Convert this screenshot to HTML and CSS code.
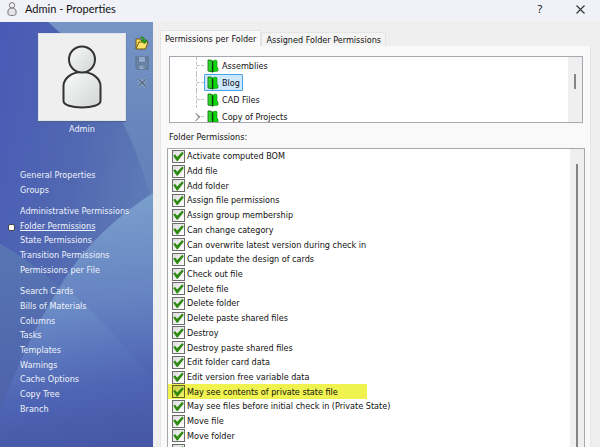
FILE: index.html
```html
<!DOCTYPE html>
<html lang="en">
<head>
<meta charset="utf-8">
<title>Admin - Properties</title>
<link rel="stylesheet" href="styles.css">
</head>
<body>
<svg class="defs" aria-hidden="true">
  <defs>
    <linearGradient id="body-fill" x1="0" y1="0" x2="1" y2="1"><stop offset="0" stop-color="#fafafa"/><stop offset="1" stop-color="#d2d5d5"/></linearGradient>
    <linearGradient id="door" x1="0" y1="0" x2="1" y2="0"><stop offset="0" stop-color="#3fe83a"/><stop offset="1" stop-color="#0cae0c"/></linearGradient>
    <symbol id="person" viewBox="0 0 40 64">
      <path d="M20 27C9 27 1.500 34 1.500 41V56C1.500 60 10 62.500 20 62.500S38.500 60 38.500 56V41C38.500 34 31 27 20 27Z" fill="url(#body-fill)" stroke="#333" stroke-width="2"/>
      <circle cx="20" cy="14.500" r="13" fill="url(#body-fill)" stroke="#333" stroke-width="2"/>
    </symbol>
    <symbol id="folder" viewBox="0 0 12 14">
      <path d="M5 2L9 1L10 2V8L11 9V12L5 13Z" fill="#10d410" stroke="#0a8a0a" stroke-width=".6"/>
      <path d="M1 1H4L6 3V13L1 12Z" fill="url(#door)" stroke="#086008" stroke-width=".8"/>
      <path d="M5.500 2.500V13" stroke="#063f06" stroke-width="1"/>
    </symbol>
  </defs>
</svg>
<header class="titlebar">
  <svg class="title-icon" viewBox="0 0 10 14"><path d="M5 6C2.500 6 1 7.500 1 9V12C1 13 3 13.500 5 13.500S9 13 9 12V9C9 7.500 7.500 6 5 6Z" fill="#e5e6e8" stroke="#777"/><circle cx="5" cy="3.300" r="2.700" fill="#eee" stroke="#777"/></svg>
  <h1>Admin - Properties</h1>
  <button class="title-button" aria-label="Help">?</button>
  <button class="title-button" aria-label="Close"><svg width="9" height="9" viewBox="0 0 9 9"><path d="M.5.5L8.500 8.500M8.500.5L.5 8.500" stroke="#333" stroke-width="1.100"/></svg></button>
</header>
<div class="window">
  <aside class="sidebar">
    <svg class="backdrop" viewBox="0 0 153 425" preserveAspectRatio="none" aria-hidden="true">
      <defs>
        <linearGradient id="base" x1="0" y1="0" x2="1" y2=".6"><stop offset="0" stop-color="#475ab6"/><stop offset=".5" stop-color="#5168b1"/><stop offset="1" stop-color="#6280b8"/></linearGradient>
        <linearGradient id="top" gradientUnits="userSpaceOnUse" x1="100" y1="0" x2="100" y2="240"><stop offset="0" stop-color="#7695c5"/><stop offset=".5" stop-color="#6784bb"/><stop offset="1" stop-color="#5f7cb8"/></linearGradient>
        <linearGradient id="arc" x1=".5" y1="0" x2=".6" y2="1"><stop offset="0" stop-color="#7ba0cd"/><stop offset=".45" stop-color="#6a8ac6"/><stop offset=".78" stop-color="#4e64b4"/><stop offset="1" stop-color="#4657a7"/></linearGradient>
        <linearGradient id="left" x1="0" y1="0" x2="0" y2="1"><stop offset="0" stop-color="#5876b3"/><stop offset="1" stop-color="#4a5da9"/></linearGradient>
        <linearGradient id="right" x1="0" y1="0" x2="0" y2="1"><stop offset="0" stop-color="#7ba0cd"/><stop offset="1" stop-color="#4a60b0"/></linearGradient>
      </defs>
      <path d="M0 0H153V425H0Z" fill="url(#base)"/>
      <path d="M48 0H153V175L148 166Q137 128 121 97Q96 40 48 0Z" fill="url(#top)"/>
      <path d="M0 222Q28 237 60 265V425H0Z" fill="url(#left)"/>
      <path d="M153 171Q90 212 60 265Q30 310 0 390V425H153Z" fill="url(#arc)"/>
      <path d="M153 171V358Q110 305 62 262Q92 212 153 171Z" fill="url(#right)" opacity=".5"/>
    </svg>
    <div class="profile">
      <figure>
        <div class="avatar"><svg width="40" height="64"><use href="#person"/></svg></div>
        <figcaption>Admin</figcaption>
      </figure>
      <div class="tools">
        <button aria-label="Open picture"><svg width="14" height="14" viewBox="0 0 14 14"><path d="M1 13V3H5L6 4.500H10V7" fill="#f7dc57" stroke="#715914"/><path d="M1 13L4 6H13L10.500 13Z" fill="#ffe36b" stroke="#715914"/><path d="M5 1Q9 0 10 4H12.500L9.500 8L6 4.500H8Q7.500 2 5 1Z" fill="#2c9b20" stroke="#226c1a" stroke-width=".4"/></svg></button>
        <button aria-label="Save picture"><svg width="14" height="14" viewBox="0 0 14 14"><path d="M1 1H13V13H3L1 11Z" fill="#6885ad" stroke="#607894" stroke-width="1.500"/><path d="M3.500 1V6.500H10.500V1M4 13V9H10V13M8 10V12" fill="#93aaca" stroke="#607894"/></svg></button>
        <button aria-label="Delete picture"><svg width="14" height="14" viewBox="0 0 14 14"><path d="M3.500 3L11 10.500M11 3L3.500 10.500" stroke="#9fb4d4" stroke-width="2.600"/><path d="M3.500 3L11 10.500M11 3L3.500 10.500" stroke="#56677c" stroke-width="1.400"/></svg></button>
      </div>
    </div>
    <nav>
      <div class="links links-first"><a href="#">General Properties</a><a href="#">Groups</a></div>
      <div class="links links-access"><a href="#">Administrative Permissions</a><a href="#" class="current" aria-current="page">Folder Permissions</a><a href="#">State Permissions</a><a href="#">Transition Permissions</a><a href="#">Permissions per File</a></div>
      <div class="links links-settings"><a href="#">Search Cards</a><a href="#">Bills of Materials</a><a href="#">Columns</a><a href="#">Tasks</a><a href="#">Templates</a><a href="#">Warnings</a><a href="#">Cache Options</a><a href="#">Copy Tree</a><a href="#">Branch</a></div>
    </nav>
  </aside>
  <main>
    <div class="tabs" role="tablist">
      <button class="tab active" role="tab" aria-selected="true">Permissions per Folder</button>
      <button class="tab" role="tab" aria-selected="false">Assigned Folder Permissions</button>
    </div>
    <section class="panel">
      <div class="box tree">
        <ul>
          <li><button><svg><use href="#folder"/></svg>Assemblies</button></li>
          <li><button class="selected"><svg><use href="#folder"/></svg>Blog</button></li>
          <li><button><svg><use href="#folder"/></svg>CAD Files</button></li>
          <li class="branch"><button><svg><use href="#folder"/></svg>Copy of Projects</button></li>
        </ul>
        <div class="scroll"><span class="thumb"></span></div>
      </div>
      <h2>Folder Permissions:</h2>
      <div class="box permissions">
        <div class="checks">
          <label><input type="checkbox" checked>Activate computed BOM</label>
          <label><input type="checkbox" checked>Add file</label>
          <label><input type="checkbox" checked>Add folder</label>
          <label><input type="checkbox" checked>Assign file permissions</label>
          <label><input type="checkbox" checked>Assign group membership</label>
          <label><input type="checkbox" checked>Can change category</label>
          <label><input type="checkbox" checked>Can overwrite latest version during check in</label>
          <label><input type="checkbox" checked>Can update the design of cards</label>
          <label><input type="checkbox" checked>Check out file</label>
          <label><input type="checkbox" checked>Delete file</label>
          <label><input type="checkbox" checked>Delete folder</label>
          <label><input type="checkbox" checked>Delete paste shared files</label>
          <label><input type="checkbox" checked>Destroy</label>
          <label><input type="checkbox" checked>Destroy paste shared files</label>
          <label><input type="checkbox" checked>Edit folder card data</label>
          <label><input type="checkbox" checked>Edit version free variable data</label>
          <label class="marked"><input type="checkbox" checked>May see contents of private state file</label>
          <label><input type="checkbox" checked>May see files before initial check in (Private State)</label>
          <label><input type="checkbox" checked>Move file</label>
          <label><input type="checkbox" checked>Move folder</label>
          <label><input type="checkbox" checked aria-label="Next permission"></label>
        </div>
        <div class="scroll"><span class="thumb"></span></div>
      </div>
    </section>
  </main>
</div>
</body>
</html>
```
FILE: styles.css
```css
* { box-sizing: border-box; }
body {
  margin: 0;
  height: 100vh;
  overflow: hidden;
  display: flex;
  flex-direction: column;
  background: #efefef;
  color: #111;
  font: 9px/14px "DejaVu Sans Condensed", "DejaVu Sans", sans-serif;
}
button { margin: 0; padding: 0; border: 0; background: none; color: inherit; font: inherit; }
h1, h2, figure, ul { margin: 0; padding: 0; font: inherit; list-style: none; }
.defs { position: absolute; width: 0; height: 0; }

.titlebar {
  flex: none;
  display: flex;
  align-items: center;
  height: 22px;
  padding: 0 0 4px 7px;
  background: #f0f2f8;
}
.title-icon { width: 10px; height: 14px; }
.titlebar h1 { flex: 1; padding-left: 8px; font: 11px/18px Lato, sans-serif; }
.title-button { display: grid; place-items: center; width: 40px; height: 18px; font: 11px/18px "Noto Sans", sans-serif; }

.window { flex: 1; min-height: 0; display: flex; }
.sidebar {
  position: relative;
  flex: none;
  width: 153px;
  overflow: hidden;
  color: #eef2fb;
}
.backdrop { position: absolute; inset: 0; width: 100%; height: 100%; }
.profile { position: relative; display: flex; gap: 9px; padding: 11px 0 0 38px; }
.avatar {
  display: grid;
  place-items: center;
  width: 88px;
  height: 88px;
  background: #efefef;
  border: 1px solid #dfe3ea;
  box-shadow: 0 1px 1px #4d6291;
}
figcaption { text-align: center; line-height: 16px; }
.tools { display: flex; flex-direction: column; gap: 6px; padding-top: 3px; }
.tools button, .tools svg { display: block; width: 14px; height: 14px; }
nav { position: relative; display: flex; flex-direction: column; gap: 7px; padding: 30px 0 0 20px; }
.links { display: grid; grid-auto-rows: 1fr; align-items: center; justify-items: start; }
.links-first { height: 30px; }
.links-access { height: 73px; }
.links-settings { height: 132px; }
.links a { position: relative; color: inherit; text-decoration: none; white-space: nowrap; }
.links .current { text-decoration: underline; }
.current::before {
  content: "";
  position: absolute;
  left: -12px;
  top: 5px;
  width: 5px;
  height: 5px;
  background: #fff;
  border: 1px solid #444;
  border-radius: 2px;
}

main { flex: 1; min-width: 0; display: flex; flex-direction: column; padding: 8px 9px 0 7px; }
.tabs { display: flex; align-items: flex-end; }
.tab {
  height: 14px;
  padding: 0 4px;
  background: #f3f3f3;
  border: 1px solid #e4e4e4;
  border-bottom: 0;
  line-height: 12px;
}
.tab.active { height: 16px; background: #f9f9f9; line-height: 14px; }
.panel {
  flex: 1;
  min-height: 0;
  display: flex;
  flex-direction: column;
  padding: 10px 5px 0 6px;
  background: #f9f9f9;
  border: solid #e6e6e6;
  border-width: 0 1px 0 1px;
}
.box { display: flex; background: #fff; border: 1px solid #a7a7af; overflow: hidden; }
.tree { flex: none; height: 67px; margin: 0 2px; }
.tree ul { flex: 1; padding-left: 26px; }
.tree li {
  display: flex;
  align-items: center;
  height: 17px;
  border-left: 1px dashed #c0c0c0;
}
.tree li::before { content: ""; width: 7px; border-top: 1px dashed #c0c0c0; }
.tree .branch { border-color: transparent; position: relative; }
.branch::after {
  content: "";
  position: absolute;
  left: -4px;
  top: 6px;
  width: 5px;
  height: 5px;
  border: solid #888;
  border-width: 1px 1px 0 0;
  transform: rotate(45deg);
}
.tree button {
  display: flex;
  align-items: center;
  gap: 3px;
  height: 17px;
  padding: 0 2px;
  border: 1px solid transparent;
  border-radius: 1px;
}
.tree button svg { width: 12px; height: 14px; }
.tree .selected { background: #cce8ff; border-color: #4aa3e8; }
.scroll { flex: none; width: 14px; background: #efefef; display: flex; justify-content: center; padding-top: 17px; }
.thumb { width: 2px; height: 15px; background: #858585; }

h2 { flex: none; padding: 7px 2px 4px; line-height: 14px; }
.permissions { flex: 1; min-height: 0; border-bottom: 0; }
.permissions .scroll { padding-top: 15px; }
.permissions .thumb { height: auto; }
.checks { flex: 1; height: 309px; display: grid; grid-auto-rows: 1fr; }
.checks label { display: flex; align-items: center; gap: 2px; padding-left: 4px; white-space: nowrap; }
.checks input {
  appearance: none;
  display: grid;
  flex: none;
  width: 13px;
  height: 13px;
  margin: 0;
  border: 1px solid #6c6c6c;
  background: linear-gradient(135deg, #dcdcdc, #fff);
}
.checks input:checked::before {
  content: "";
  background: #2d8a10;
  clip-path: polygon(2% 44%, 20% 34%, 38% 56%, 84% 8%, 98% 22%, 43% 92%, 34% 92%);
}
.checks .marked { width: 199px; background: #f0f250; }
.checks .marked input { border-color: #66661f; background: linear-gradient(135deg, #caca45, #f2f46a); }
```
